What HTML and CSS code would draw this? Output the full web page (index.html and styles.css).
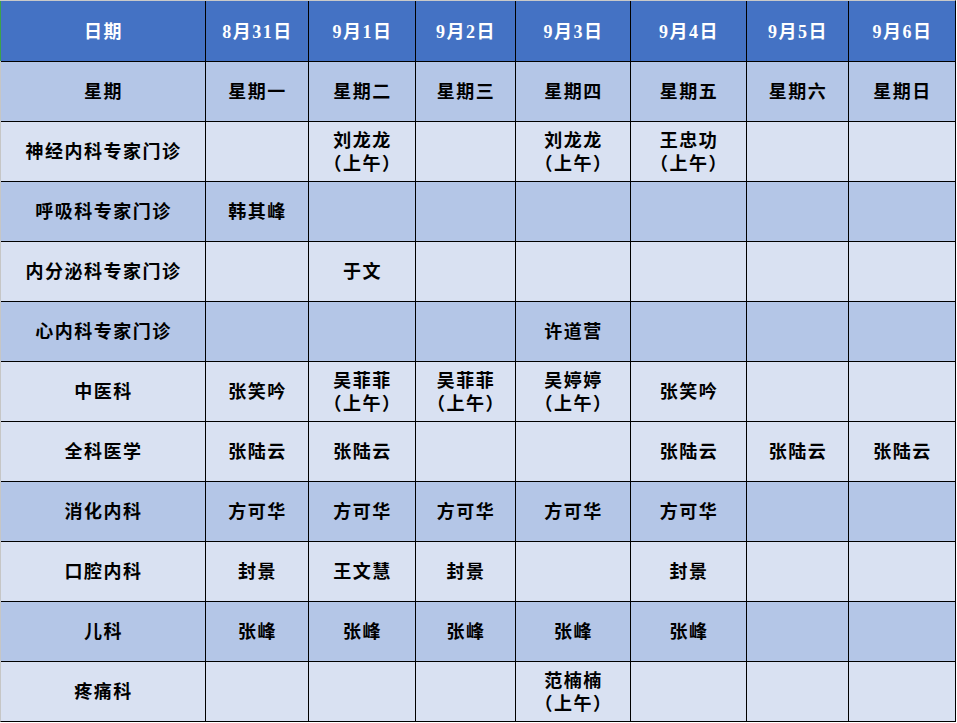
FILE: index.html
```html
<!DOCTYPE html>
<html lang="zh-CN">
<head>
<meta charset="utf-8">
<title>门诊排班表</title>
<link rel="stylesheet" href="styles.css">
</head>
<body>
<div class="sheet">
  <div class="c hd first">日期</div>
  <div class="c hd">8月31日</div>
  <div class="c hd">9月1日</div>
  <div class="c hd">9月2日</div>
  <div class="c hd">9月3日</div>
  <div class="c hd">9月4日</div>
  <div class="c hd">9月5日</div>
  <div class="c hd">9月6日</div>

  <div class="c dk">星期</div>
  <div class="c dk">星期一</div>
  <div class="c dk">星期二</div>
  <div class="c dk">星期三</div>
  <div class="c dk">星期四</div>
  <div class="c dk">星期五</div>
  <div class="c dk">星期六</div>
  <div class="c dk">星期日</div>

  <div class="c lt">神经内科专家门诊</div>
  <div class="c lt"></div>
  <div class="c lt">刘龙龙<br>（上午）</div>
  <div class="c lt"></div>
  <div class="c lt">刘龙龙<br>（上午）</div>
  <div class="c lt">王忠功<br>（上午）</div>
  <div class="c lt"></div>
  <div class="c lt"></div>

  <div class="c dk">呼吸科专家门诊</div>
  <div class="c dk">韩其峰</div>
  <div class="c dk"></div>
  <div class="c dk"></div>
  <div class="c dk"></div>
  <div class="c dk"></div>
  <div class="c dk"></div>
  <div class="c dk"></div>

  <div class="c lt">内分泌科专家门诊</div>
  <div class="c lt"></div>
  <div class="c lt">于文</div>
  <div class="c lt"></div>
  <div class="c lt"></div>
  <div class="c lt"></div>
  <div class="c lt"></div>
  <div class="c lt"></div>

  <div class="c dk">心内科专家门诊</div>
  <div class="c dk"></div>
  <div class="c dk"></div>
  <div class="c dk"></div>
  <div class="c dk">许道营</div>
  <div class="c dk"></div>
  <div class="c dk"></div>
  <div class="c dk"></div>

  <div class="c lt">中医科</div>
  <div class="c lt">张笑吟</div>
  <div class="c lt">吴菲菲<br>（上午）</div>
  <div class="c lt">吴菲菲<br>（上午）</div>
  <div class="c lt">吴婷婷<br>（上午）</div>
  <div class="c lt">张笑吟</div>
  <div class="c lt"></div>
  <div class="c lt"></div>

  <div class="c lt">全科医学</div>
  <div class="c lt">张陆云</div>
  <div class="c lt">张陆云</div>
  <div class="c lt"></div>
  <div class="c lt"></div>
  <div class="c lt">张陆云</div>
  <div class="c lt">张陆云</div>
  <div class="c lt">张陆云</div>

  <div class="c dk">消化内科</div>
  <div class="c dk">方可华</div>
  <div class="c dk">方可华</div>
  <div class="c dk">方可华</div>
  <div class="c dk">方可华</div>
  <div class="c dk">方可华</div>
  <div class="c dk"></div>
  <div class="c dk"></div>

  <div class="c lt">口腔内科</div>
  <div class="c lt">封景</div>
  <div class="c lt">王文慧</div>
  <div class="c lt">封景</div>
  <div class="c lt"></div>
  <div class="c lt">封景</div>
  <div class="c lt"></div>
  <div class="c lt"></div>

  <div class="c dk">儿科</div>
  <div class="c dk">张峰</div>
  <div class="c dk">张峰</div>
  <div class="c dk">张峰</div>
  <div class="c dk">张峰</div>
  <div class="c dk">张峰</div>
  <div class="c dk"></div>
  <div class="c dk"></div>

  <div class="c lt">疼痛科</div>
  <div class="c lt"></div>
  <div class="c lt"></div>
  <div class="c lt"></div>
  <div class="c lt">范楠楠<br>（上午）</div>
  <div class="c lt"></div>
  <div class="c lt"></div>
  <div class="c lt"></div>
</div>
</body>
</html>
```

FILE: styles.css
```css
html, body {
  margin: 0;
  padding: 0;
  background: #ffffff;
}

.sheet {
  width: 956px;
  box-sizing: border-box;
  display: grid;
  grid-template-columns: 204px 102px 106px 99px 114px 115px 101px 106px;
  grid-template-rows: 60px repeat(11, 59px);
  gap: 1px;
  background: #000000;
  border-top: 1px solid #c9c9c9;
  border-left: 1px solid #c6c6c6;
  border-right: 1px solid #000000;
  border-bottom: 1px solid #000000;
  font-family: "Liberation Serif", "Noto Sans CJK SC", serif;
  font-weight: 700;
  font-size: 18px;
  letter-spacing: 1.5px;
  line-height: 23px;
  color: #000000;
}

.c {
  display: flex;
  align-items: center;
  justify-content: center;
  text-align: center;
  padding-top: 2px;
  padding-left: 1px;
  box-sizing: border-box;
}

.hd {
  background: #4472c4;
  color: #ffffff;
  font-weight: 700;
}

.first {
  box-shadow: -1px 0 0 #3ca24a;
}

.dk {
  background: #b4c6e7;
}

.lt {
  background: #d9e1f2;
}
```
